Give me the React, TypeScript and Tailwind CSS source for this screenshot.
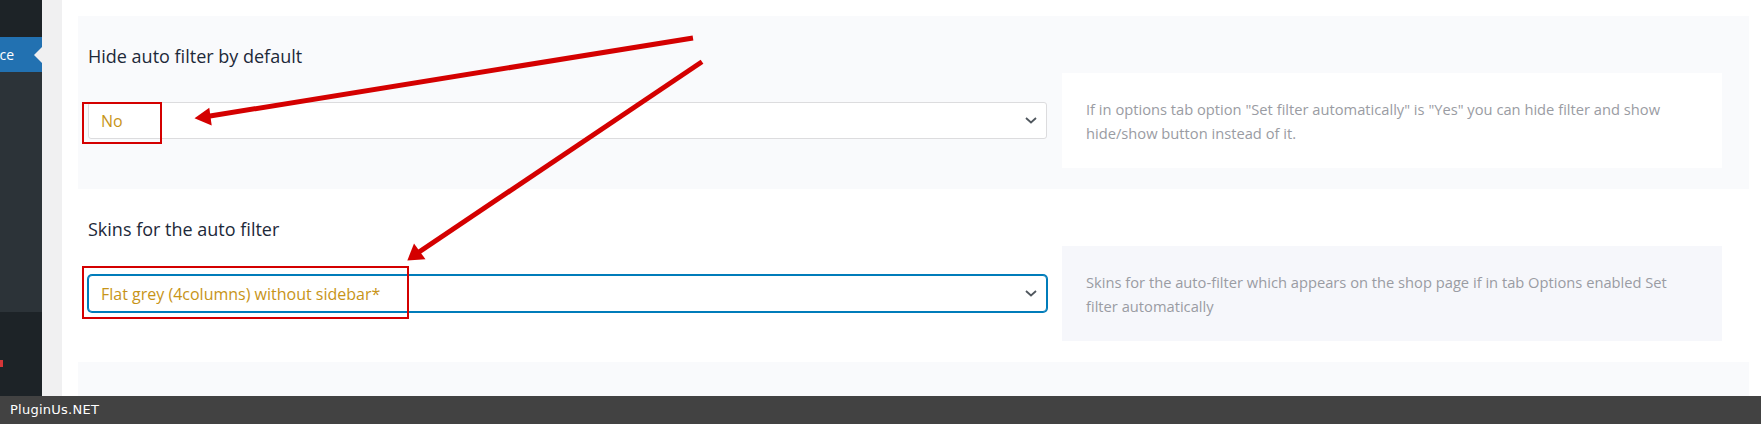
import React from "react";

function Chevron() {
  return (
    <svg width="12" height="7" viewBox="0 0 12 7" className="shrink-0">
      <polyline points="1,1 6,5.5 11,1" fill="none" stroke="#50575e" strokeWidth="1.8" />
    </svg>
  );
}

function Section({
  title,
  value,
  desc,
  focused,
  bg,
  descBg,
}: {
  title: string;
  value: string;
  desc: string;
  focused?: boolean;
  bg: string;
  descBg: string;
}) {
  return (
    <div className={`${bg} pl-[10px] pr-[27px] pt-[28px] pb-[21px] flex flex-col`}>
      <div className="text-[18px] leading-[24px] text-[#1d2939] mb-[5px]">{title}</div>
      <div className="flex items-center gap-[15px] h-[95px]">
        <div
          className={
            focused
              ? "flex-1 h-[37px] bg-white border border-[#007cba] shadow-[0_0_0_1px_#007cba] rounded-[4px] flex items-center justify-between pl-[12px] pr-[9px]"
              : "flex-1 h-[37px] bg-white border border-[#dcdcde] rounded-[3px] flex items-center justify-between pl-[12px] pr-[9px]"
          }
        >
          <span className="text-[16px] text-[#c79418]">{value}</span>
          <Chevron />
        </div>
        <div className={`w-[660px] h-[95px] ${descBg} flex items-center pl-[24px] pr-[36px]`}>
          <p className="text-[14.7px] leading-[24px] text-[#9a9ca3]">{desc}</p>
        </div>
      </div>
    </div>
  );
}

export default function App() {
  return (
    <div
      className="relative w-full h-[424px] flex flex-col overflow-hidden"
      style={{ fontFamily: '"Open Sans", "Noto Sans", sans-serif' }}
    >
      <div className="flex flex-1 min-h-0">
        <div className="w-[42px] flex flex-col">
          <div className="h-[37px] bg-[#1d2327]" />
          <div className="h-[35px] bg-[#2271b1] flex items-center">
            <div className="flex-1 flex justify-end overflow-hidden pr-[20px]">
              <span className="whitespace-nowrap text-[14px] text-white">Appearance</span>
            </div>
            <div className="w-0 h-0 border-y-[8px] border-y-transparent border-r-[8px] border-r-[#f0f0f1]" />
          </div>
          <div className="h-[240px] bg-[#2c3338]" />
          <div className="flex-1 bg-[#1d2327] pt-[48px]">
            <div className="w-[3px] h-[7px] bg-[#d63638]" />
          </div>
        </div>
        <div className="w-[20px] bg-[#f0f0f1]" />
        <div className="flex-1 bg-white pt-[16px] pl-[16px] pr-[12px] flex flex-col">
          <Section
            bg="bg-[#f9fafc]"
            descBg="bg-white"
            title="Hide auto filter by default"
            value="No"
            desc={'If in options tab option "Set filter automatically" is "Yes" you can hide filter and show hide/show button instead of it.'}
          />
          <Section
            bg="bg-white"
            descBg="bg-[#f6f7fb]"
            title="Skins for the auto filter"
            value="Flat grey (4columns) without sidebar*"
            focused
            desc="Skins for the auto-filter which appears on the shop page if in tab Options enabled Set filter automatically"
          />
          <div className="flex-1 bg-[#f9fafc]" />
        </div>
      </div>
      <div
        className="h-[28px] bg-[#424242] flex items-center pl-[10px] text-[13px] tracking-[0.25px] text-white"
        style={{ fontFamily: '"DejaVu Sans", sans-serif' }}
      >
        PluginUs.NET
      </div>

      <svg
        className="absolute left-0 top-0 pointer-events-none"
        width="1761"
        height="424"
        viewBox="0 0 1761 424"
      >
        <rect x="83" y="103" width="78" height="40" fill="none" stroke="#d40000" strokeWidth="2" />
        <rect x="83" y="267" width="325" height="51" fill="none" stroke="#d40000" strokeWidth="2" />
        <line x1="693" y1="38" x2="207" y2="116.5" stroke="#d40000" strokeWidth="5" />
        <polygon points="194.5,118.3 211.7,125.5 209.3,107.8" fill="#d40000" />
        <line x1="702" y1="61.7" x2="416" y2="254" stroke="#d40000" strokeWidth="5" />
        <polygon points="407.3,260.5 425.5,259.3 414,243.5" fill="#d40000" />
      </svg>
    </div>
  );
}
